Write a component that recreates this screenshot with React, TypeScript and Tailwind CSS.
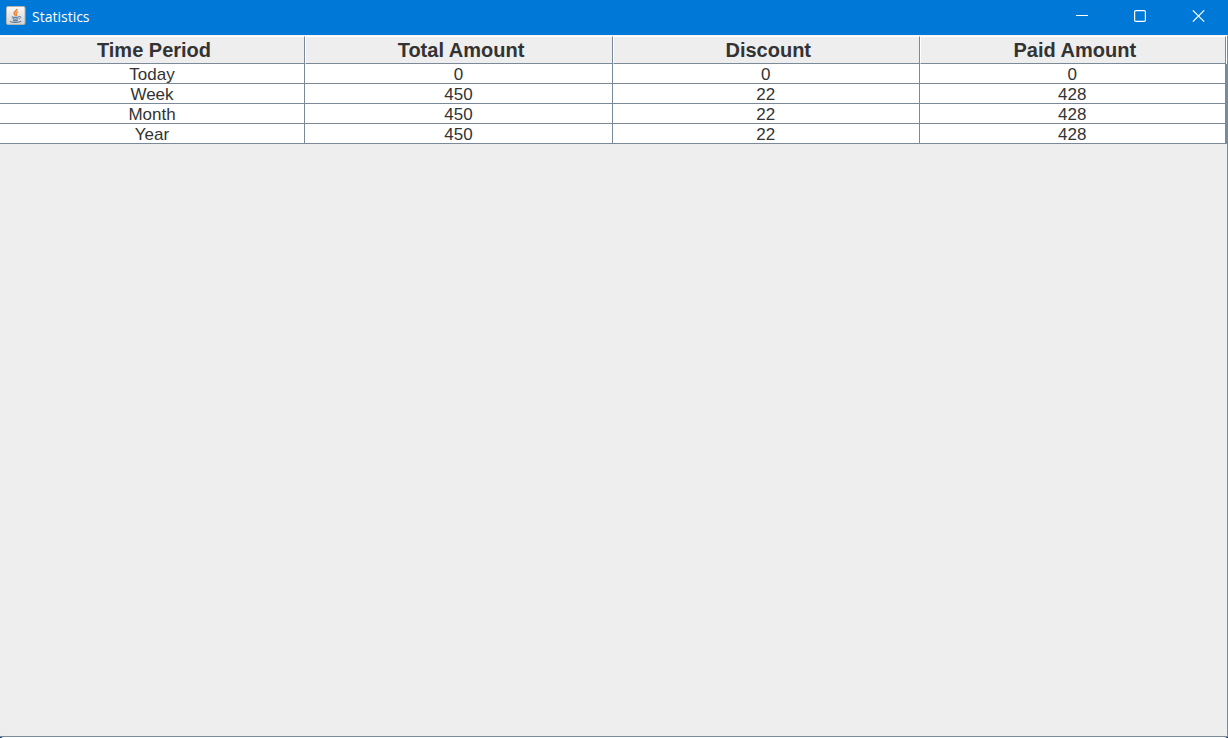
const columns = ["Time Period", "Total Amount", "Discount", "Paid Amount"];

const rows = [
  ["Today", "0", "0", "0"],
  ["Week", "450", "22", "428"],
  ["Month", "450", "22", "428"],
  ["Year", "450", "22", "428"],
];

function JavaIcon() {
  return (
    <svg width="20" height="20" viewBox="0 0 20 20" fill="none" aria-hidden="true">
      <defs>
        <linearGradient id="tile" x1="0" y1="0" x2="0" y2="1">
          <stop offset="0" stopColor="#fbfaf8" />
          <stop offset="1" stopColor="#d3d3d3" />
        </linearGradient>
      </defs>
      <rect x="0.5" y="0.5" width="18.500" height="18" rx="1.5" fill="url(#tile)" stroke="#b9b4ab" />
      <path d="M10.600 3c.8 1.800-2.700 2.700-2.400 4.500.1 1.100 1.200 1.500 1.500 2.300" stroke="#ee8232" strokeWidth="1.700" />
      <path d="M12.300 5.700c-1.500.6-2.500 1.200-2.100 2.100.3.700.7 1.100.1 2" stroke="#ee8232" strokeWidth="1.200" />
      <path d="M5.800 10.800c1.500.8 5.500.8 7.200 0M6.500 12.600c1.700.7 4.300.7 5.900 0M7 14.200c1.400.6 3.500.6 4.700 0" stroke="#54799f" strokeWidth="1.100" />
      <path d="M13 10.500c2-.8 2.600 1.500.2 2.500" stroke="#54799f" strokeWidth="0.900" />
      <path d="M4.600 15c-1.200 1.700 8.800 1.900 10.400.2" stroke="#54799f" strokeWidth="1.100" />
    </svg>
  );
}

function TitleBar() {
  return (
    <header className="flex h-[35px] shrink-0 items-center justify-between bg-[#0078d7] text-white">
      <div className="flex items-start gap-[6px] pb-[2px] pl-[6px]">
        <JavaIcon />
        <h1 className="pt-px font-['Open_Sans','Noto_Sans',sans-serif] text-[14px] leading-5">Statistics</h1>
      </div>
      <div className="flex h-full pb-[3px]">
        <button type="button" aria-label="Minimize" className="flex w-[58px] items-center justify-center">
          <svg width="12" height="12" viewBox="0 0 12 12" fill="none" stroke="currentColor">
            <path d="M0 5.500h12" />
          </svg>
        </button>
        <button type="button" aria-label="Maximize" className="flex w-[58px] items-center justify-center">
          <svg width="12" height="12" viewBox="0 0 12 12" fill="none" stroke="currentColor" strokeWidth="1.200">
            <rect x="0.600" y="0.600" width="10.800" height="10.800" rx="1.200" />
          </svg>
        </button>
        <button type="button" aria-label="Close" className="flex w-[59px] items-center justify-center">
          <svg width="13" height="12" viewBox="0 0 13 12" fill="none" stroke="currentColor" strokeWidth="1.100">
            <path d="M0.800 0.300l11.400 11.400M12.200 0.300l-11.400 11.400" />
          </svg>
        </button>
      </div>
    </header>
  );
}

function StatisticsTable() {
  return (
    <table className="w-full table-fixed border-separate border-spacing-0 text-center text-[#333333]">
      <colgroup>
        <col className="w-[305px]" />
        <col className="w-[308px]" />
        <col />
        <col />
      </colgroup>
      <thead>
        <tr>
          {columns.map((name) => (
            <th
              key={name}
              scope="col"
              className="h-[28px] border-t border-r border-b border-l border-t-white border-r-[#7a8a99] border-b-[#7a8a99] border-l-white bg-[#eeeeee] py-0 pr-0 pl-1 text-[20px] leading-[26px] font-bold first:border-l-0"
            >
              {name}
            </th>
          ))}
        </tr>
      </thead>
      <tbody>
        {rows.map((row) => (
          <tr key={row[0]}>
            {row.map((value, index) => (
              <td
                key={columns[index]}
                className="h-[20px] border-r border-b border-[#7a8a99] bg-white px-0 pt-[2px] pb-0 text-[17px] leading-[17px]"
              >
                {value}
              </td>
            ))}
          </tr>
        ))}
      </tbody>
    </table>
  );
}

export default function App() {
  return (
    <div className="flex min-h-screen flex-col bg-[#08305a] font-['Liberation_Sans',Arial,sans-serif]">
      <div className="flex flex-1 flex-col overflow-hidden rounded-b-[4px] bg-white">
        <TitleBar />
        <main className="mb-px flex-1 border-t border-r border-b border-t-[#f4f4f4] border-r-[#7a8a99] border-b-[#7a8a99] bg-[#eeeeee]">
          <div className="flex">
            <div className="min-w-0 flex-1">
              <StatisticsTable />
            </div>
            <div className="flex w-px flex-col">
              <div className="h-[28px] bg-white" />
              <div className="flex-1 bg-[#7a8a99]" />
            </div>
          </div>
        </main>
      </div>
    </div>
  );
}
